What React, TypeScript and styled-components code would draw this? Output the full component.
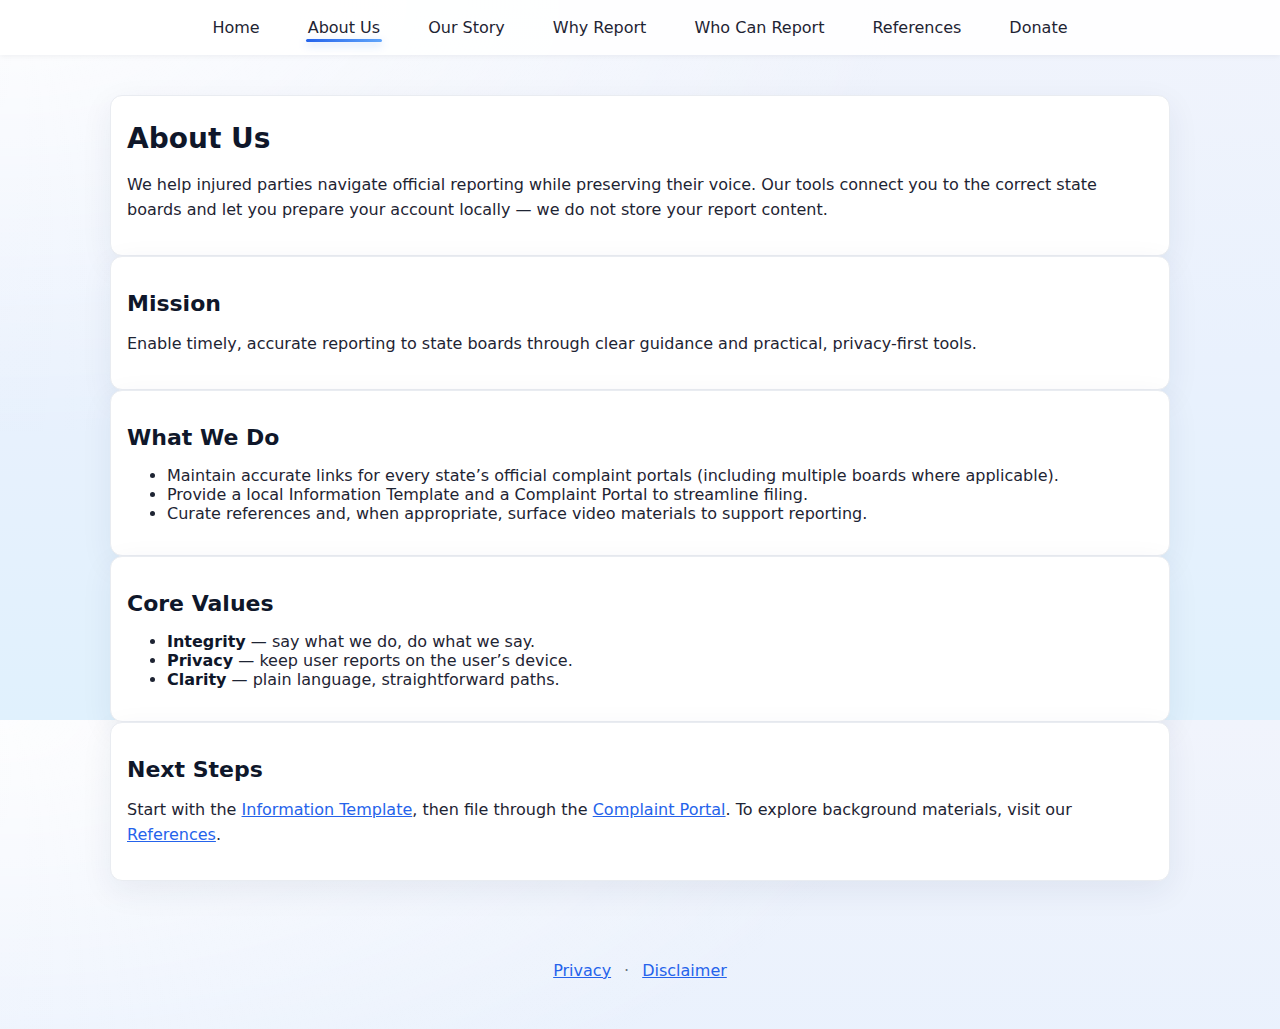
import styled, { createGlobalStyle } from 'styled-components'

const GlobalStyle = createGlobalStyle`
  html {
    background-color: #eef3fc;
    background-image:
      radial-gradient(ellipse 70% 60% at 0% 0%, rgba(255, 255, 255, 0.85), rgba(255, 255, 255, 0) 100%),
      linear-gradient(180deg, #f1f4fc 0%, #e9f1fd 50%, #e0f1fd 100%);
    background-size: 100% 720px;
    background-repeat: repeat-y;
  }

  body {
    margin: 0;
    font-family: "DejaVu Sans", "Noto Sans", sans-serif;
    font-size: 16px;
    color: #1e2433;
  }
`

const HeaderBar = styled.header`
  height: 55px;
  background: rgba(255, 255, 255, 0.88);
  box-shadow: 0 1px 6px rgba(15, 23, 42, 0.06);
  display: flex;
  align-items: center;
  justify-content: center;
`

const Nav = styled.nav`
  display: flex;
  align-items: center;
  gap: 44px;
`

const NavLink = styled.a<{ $active?: boolean }>`
  position: relative;
  padding: 8px 2px;
  color: #1e2433;
  text-decoration: none;
  font-size: 16px;

  &::after {
    content: '';
    display: ${({ $active }) => ($active ? 'block' : 'none')};
    position: absolute;
    left: 0;
    right: 0;
    bottom: 3px;
    height: 3px;
    border-radius: 3px;
    background: linear-gradient(90deg, #2563eb, #60a5fa);
    box-shadow: 0 3px 8px rgba(37, 99, 235, 0.28);
  }
`

const Main = styled.main`
  max-width: 1060px;
  margin: 0 auto;
  padding-top: 40px;
`

const Card = styled.section`
  background: #ffffff;
  border: 1px solid #e9ecf1;
  border-radius: 12px;
  padding: 16px;
  box-shadow: 0 10px 32px rgba(30, 41, 80, 0.07);
`

const Title = styled.h1`
  margin: 10px 0 18px;
  font-size: 28px;
  font-weight: 700;
  color: #0f172a;
`

const Heading = styled.h2`
  margin: 18px 0 15px;
  font-size: 22px;
  font-weight: 700;
  color: #0f172a;
`

const Text = styled.p`
  margin: 16px 0;
  line-height: 1.56;
`

const List = styled.ul`
  margin: 16px 0;
  padding-left: 40px;
`

const Strong = styled.strong`
  color: #0f172a;
`

const InlineLink = styled.a`
  color: #2563eb;
  text-decoration: underline;
`

const Footer = styled.footer`
  padding: 80px 0 40px;
  display: flex;
  justify-content: center;
  align-items: center;
`

const FooterLink = styled.a`
  color: #2563eb;
  text-decoration: underline;
`

const Dot = styled.span`
  margin: 0 13px;
  color: #6b7280;
`

const navItems = ['Home', 'About Us', 'Our Story', 'Why Report', 'Who Can Report', 'References', 'Donate']

export default function App() {
  return (
    <>
      <GlobalStyle />
      <HeaderBar>
        <Nav aria-label="Main navigation">
          {navItems.map((item) => (
            <NavLink key={item} href="#" $active={item === 'About Us'}>
              {item}
            </NavLink>
          ))}
        </Nav>
      </HeaderBar>

      <Main>
        <Card>
          <Title>About Us</Title>
          <Text>
            We help injured parties navigate official reporting while preserving their voice. Our tools connect you
            to the correct state boards and let you prepare your account locally — we do not store your report
            content.
          </Text>
        </Card>

        <Card>
          <Heading>Mission</Heading>
          <Text>
            Enable timely, accurate reporting to state boards through clear guidance and practical, privacy-first
            tools.
          </Text>
        </Card>

        <Card>
          <Heading>What We Do</Heading>
          <List>
            <li>
              Maintain accurate links for every state’s official complaint portals (including multiple boards where
              applicable).
            </li>
            <li>Provide a local Information Template and a Complaint Portal to streamline filing.</li>
            <li>Curate references and, when appropriate, surface video materials to support reporting.</li>
          </List>
        </Card>

        <Card>
          <Heading>Core Values</Heading>
          <List>
            <li>
              <Strong>Integrity</Strong> — say what we do, do what we say.
            </li>
            <li>
              <Strong>Privacy</Strong> — keep user reports on the user’s device.
            </li>
            <li>
              <Strong>Clarity</Strong> — plain language, straightforward paths.
            </li>
          </List>
        </Card>

        <Card>
          <Heading>Next Steps</Heading>
          <Text>
            Start with the <InlineLink href="#">Information Template</InlineLink>, then file through the{' '}
            <InlineLink href="#">Complaint Portal</InlineLink>. To explore background materials, visit our{' '}
            <InlineLink href="#">References</InlineLink>.
          </Text>
        </Card>
      </Main>

      <Footer>
        <FooterLink href="#">Privacy</FooterLink>
        <Dot>·</Dot>
        <FooterLink href="#">Disclaimer</FooterLink>
      </Footer>
    </>
  )
}
